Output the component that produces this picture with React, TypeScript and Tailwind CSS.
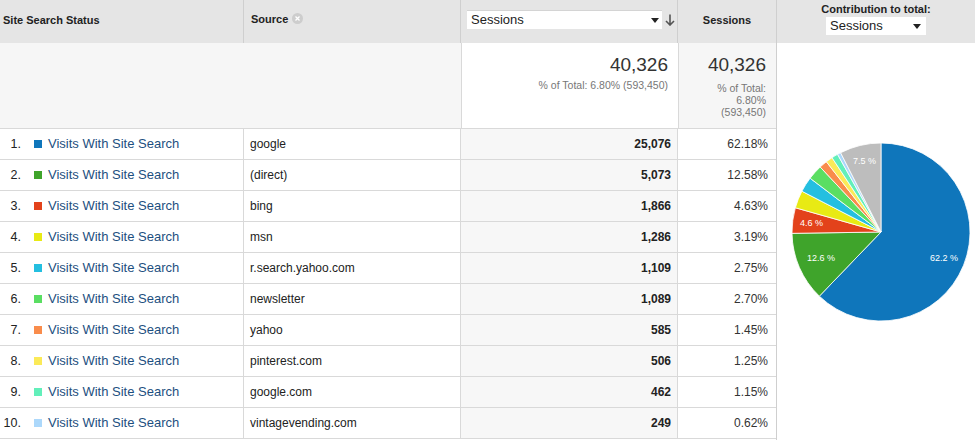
import { FunctionComponent } from "react";

type Row = { source: string; color: string; sessions: string; pct: string };

const rows: Row[] = [
    { source: "google", color: "#0f76bb", sessions: "25,076", pct: "62.18%" },
    { source: "(direct)", color: "#3fa42b", sessions: "5,073", pct: "12.58%" },
    { source: "bing", color: "#e3421b", sessions: "1,866", pct: "4.63%" },
    { source: "msn", color: "#e8ea14", sessions: "1,286", pct: "3.19%" },
    { source: "r.search.yahoo.com", color: "#24bfe0", sessions: "1,109", pct: "2.75%" },
    { source: "newsletter", color: "#5ade62", sessions: "1,089", pct: "2.70%" },
    { source: "yahoo", color: "#f98c4c", sessions: "585", pct: "1.45%" },
    { source: "pinterest.com", color: "#fbea58", sessions: "506", pct: "1.25%" },
    { source: "google.com", color: "#62efba", sessions: "462", pct: "1.15%" },
    { source: "vintagevending.com", color: "#acd8fb", sessions: "249", pct: "0.62%" },
];

const slices = [
    ...rows.map((r) => ({ v: parseFloat(r.pct), c: r.color })),
    { v: 7.5, c: "#bdbdbd" },
];

const Pie: FunctionComponent = () => {
    const cx = 104;
    const cy = 189;
    const r = 89;
    let start = 0;
    const pt = (a: number) => {
        const rad = ((a - 90) * Math.PI) / 180;
        return [cx + r * Math.cos(rad), cy + r * Math.sin(rad)];
    };
    return (
        <svg width="199" height="395" viewBox="0 0 199 395">
            {slices.map((s, i) => {
                const a0 = start;
                const a1 = start + (s.v / 100) * 360;
                start = a1;
                const [x0, y0] = pt(a0);
                const [x1, y1] = pt(a1);
                const large = a1 - a0 > 180 ? 1 : 0;
                return (
                    <path
                        key={i}
                        d={`M${cx} ${cy} L${x0} ${y0} A${r} ${r} 0 ${large} 1 ${x1} ${y1} Z`}
                        fill={s.c}
                        stroke="#fff"
                        strokeWidth="0.8"
                    />
                );
            })}
            <g fill="#fff" fontSize="9" fontFamily="Liberation Sans, Arial, sans-serif">
                <text x="153" y="218">62.2 %</text>
                <text x="30" y="218">12.6 %</text>
                <text x="23" y="183">4.6 %</text>
                <text x="76" y="121">7.5 %</text>
            </g>
        </svg>
    );
};

const Caret = () => (
    <svg width="8" height="5" viewBox="0 0 8 5">
        <path d="M0 0 L8 0 L4 5 Z" fill="#222" />
    </svg>
);

const App: FunctionComponent = () => {
    return (
        <div className="w-[975px] h-[440px] bg-white flex text-[#222]" style={{ fontFamily: '"Liberation Sans", Arial, sans-serif' }}>
            <div className="w-[776px] flex flex-col">
                {/* header */}
                <div className="h-[43px] bg-[#e5e5e5] flex text-[11px] font-bold">
                    <div className="w-[244px] border-r border-[#cfcfcf] pl-[3px] pt-[12px]">Site Search Status</div>
                    <div className="w-[217px] border-r border-[#cfcfcf] pl-[7px] pt-[11px] flex items-start gap-[4px]">
                        <span>Source</span>
                        <span className="mt-[2px] w-[11px] h-[11px] rounded-full bg-[#cdcdcd] flex items-center justify-center">
                            <svg width="5" height="5" viewBox="0 0 5 5">
                                <path d="M0.5 0.5 L4.5 4.5 M4.5 0.5 L0.5 4.5" stroke="#fff" strokeWidth="1.3" />
                            </svg>
                        </span>
                    </div>
                    <div className="w-[217px] border-r border-[#cfcfcf] pl-[6px] pt-[10px] flex items-start">
                        <div className="w-[195px] h-[19px] bg-white border-t border-[#d4d4d4] flex items-center justify-between pl-[4px] pr-[3px] text-[13px] font-normal">
                            <span>Sessions</span>
                            <Caret />
                        </div>
                        <svg className="ml-[3px] mt-[4px]" width="10" height="12" viewBox="0 0 10 12">
                            <path d="M5 0.5 V11 M1 7 L5 11 L9 7" stroke="#555" strokeWidth="1.6" fill="none" />
                        </svg>
                    </div>
                    <div className="w-[98px] pt-[12px] text-center">Sessions</div>
                </div>
                {/* summary */}
                <div className="h-[85px] flex">
                    <div className="w-[461px] bg-[#f6f6f6]" />
                    <div className="w-[217px] border-l border-[#d9d9d9] bg-white flex flex-col items-end pr-[10px] pt-[11px]">
                        <span className="text-[19px] leading-[22px] text-[#333]">40,326</span>
                        <span className="text-[10.5px] leading-[13px] text-[#777] mt-[3px]">% of Total: 6.80% (593,450)</span>
                    </div>
                    <div className="w-[98px] border-l border-[#d9d9d9] bg-[#f6f6f6] flex flex-col items-end pr-[10px] pt-[11px] text-right">
                        <span className="text-[19px] leading-[22px] text-[#333]">40,326</span>
                        <span className="text-[10.5px] leading-[12px] text-[#777] mt-[6px]">% of Total:<br />6.80%<br />(593,450)</span>
                    </div>
                </div>
                {/* rows */}
                <div className="border-b border-[#d9d9d9]">
                    {rows.map((r, i) => (
                        <div key={i} className="h-[31px] flex border-t border-[#d9d9d9]">
                            <div className="w-[244px] border-r border-[#d9d9d9] flex items-center">
                                <span className="w-[21px] text-right text-[12.5px]">{i + 1}.</span>
                                <span className="ml-[13px] w-[8px] h-[8px]" style={{ backgroundColor: r.color }} />
                                <span className="ml-[6px] text-[13px] text-[#1d4f80]">Visits With Site Search</span>
                            </div>
                            <div className="w-[217px] border-r border-[#d9d9d9] flex items-center pl-[6px] text-[12px]">{r.source}</div>
                            <div className="w-[217px] border-r border-[#d9d9d9] bg-[#f7f7f7] flex items-center justify-end pr-[6px] text-[12px] font-bold">{r.sessions}</div>
                            <div className="w-[98px] flex items-center justify-end pr-[8px] text-[12px] text-[#333]">{r.pct}</div>
                        </div>
                    ))}
                </div>
            </div>
            <div className="w-[199px] flex flex-col border-l border-[#cfcfcf]">
                <div className="h-[43px] bg-[#e5e5e5] flex flex-col items-center pt-[3px]">
                    <span className="text-[11px] font-bold leading-[13px]">Contribution to total:</span>
                    <div className="mt-[1px] w-[100px] h-[18px] bg-white flex items-center justify-between pl-[4px] pr-[5px] text-[13px]">
                        <span>Sessions</span>
                        <Caret />
                    </div>
                </div>
                <div className="h-[396px]">
                    <Pie />
                </div>
            </div>
        </div>
    );
};

export default App;
